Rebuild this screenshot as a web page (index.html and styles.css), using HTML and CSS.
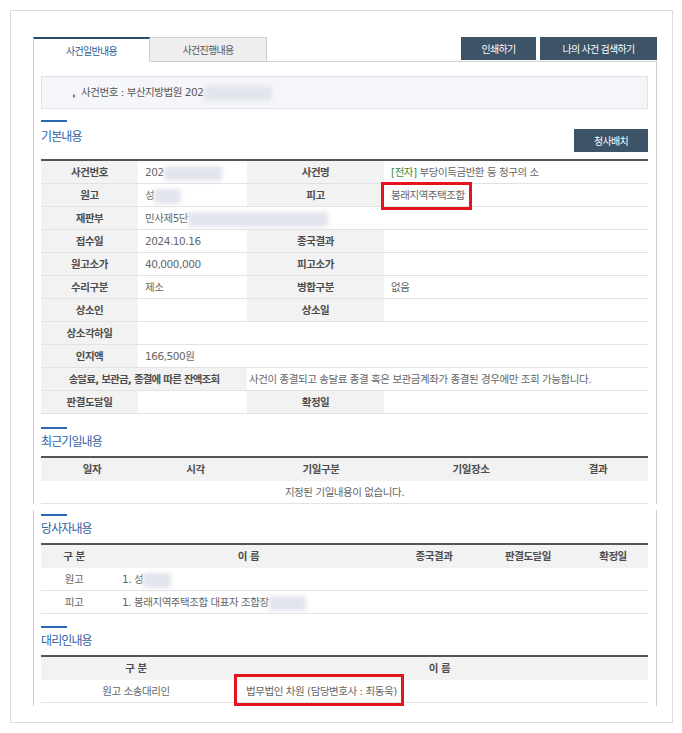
FILE: index.html
```html
<!DOCTYPE html>
<html lang="ko">
<head>
<meta charset="utf-8">
<title>사건일반내용</title>
<link rel="stylesheet" href="styles.css">
</head>
<body>
<div class="frame">
  <div class="tabs">
    <div class="tab tab-active">사건일반내용</div>
    <div class="tab tab-inactive">사건진행내용</div>
    <div class="tab-fill"></div>
    <div class="tab-actions">
      <button class="btn btn-print">인쇄하기</button>
      <button class="btn btn-search">나의 사건 검색하기</button>
    </div>
  </div>

  <div class="panel panel-top">
    <div class="case-box"><span class="bullet"></span>사건번호 : 부산지방법원 202<span class="redact r68"></span></div>

    <div class="section-bar bar-first"></div>
    <div class="section-head head-btn">
      <h2>기본내용</h2>
      <button class="btn btn-map">청사배치</button>
    </div>
    <table class="grid info">
      <colgroup><col class="ic1"><col class="ic2"><col class="ic3"><col></colgroup>
      <tbody>
        <tr><th>사건번호</th><td>202<span class="redact r58"></span></td><th>사건명</th><td><span class="etag">[전자]</span> 부당이득금반환 등 청구의 소</td></tr>
        <tr><th>원고</th><td>성<span class="redact r27"></span></td><th>피고</th><td><span class="marked mark-a">봉래지역주택조합</span></td></tr>
        <tr><th>재판부</th><td colspan="3">민사제5단<span class="redact r140"></span></td></tr>
        <tr><th>접수일</th><td>2024.10.16</td><th>종국결과</th><td></td></tr>
        <tr><th>원고소가</th><td>40,000,000</td><th>피고소가</th><td></td></tr>
        <tr><th>수리구분</th><td>제소</td><th>병합구분</th><td>없음</td></tr>
        <tr><th>상소인</th><td></td><th>상소일</th><td></td></tr>
        <tr><th>상소각하일</th><td colspan="3"></td></tr>
        <tr><th>인지액</th><td colspan="3">166,500원</td></tr>
        <tr><th colspan="2" class="long">송달료, 보관금, 종결에 따른 잔액조회</th><td colspan="2" class="tight">사건이 종결되고 송달료 종결 혹은 보관금계좌가 종결된 경우에만 조회 가능합니다.</td></tr>
        <tr><th>판결도달일</th><td></td><th>확정일</th><td></td></tr>
      </tbody>
    </table>

    <div class="section-bar bar-gap13"></div>
    <div class="section-head"><h2>최근기일내용</h2></div>
    <table class="grid list">
      <colgroup><col class="dc1"><col class="dc2"><col class="dc3"><col class="dc4"><col></colgroup>
      <thead><tr><th>일자</th><th>시각</th><th>기일구분</th><th>기일장소</th><th>결과</th></tr></thead>
      <tbody><tr><td colspan="5" class="mid">지정된 기일내용이 없습니다.</td></tr></tbody>
    </table>
  </div>

  <div class="panel panel-bottom">
    <div class="section-bar"></div>
    <div class="section-head"><h2>당사자내용</h2></div>
    <table class="grid list">
      <colgroup><col class="pc1"><col class="pc2"><col class="pc3"><col class="pc4"><col></colgroup>
      <thead><tr><th>구 분</th><th>이 름</th><th>종국결과</th><th>판결도달일</th><th>확정일</th></tr></thead>
      <tbody>
        <tr><td class="mid">원고</td><td class="name">1. 성<span class="redact r28"></span></td><td></td><td></td><td></td></tr>
        <tr><td class="mid">피고</td><td class="name">1. 봉래지역주택조합 대표자 조합장<span class="redact r37"></span></td><td></td><td></td><td></td></tr>
      </tbody>
    </table>

    <div class="section-bar bar-gap12"></div>
    <div class="section-head"><h2>대리인내용</h2></div>
    <table class="grid list">
      <colgroup><col class="ac1"><col></colgroup>
      <thead><tr><th>구 분</th><th>이 름</th></tr></thead>
      <tbody>
        <tr><td class="mid">원고 소송대리인</td><td class="name"><span class="marked mark-b">법무법인 차원 (담당변호사 : 최동욱)</span></td></tr>
      </tbody>
    </table>
  </div>
</div>
</body>
</html>
```

FILE: styles.css
```css
body {
  margin: 0;
  background: #fff;
  font-family: "DejaVu Sans", "Noto Sans CJK KR", sans-serif;
  font-size: 10.5px;
  letter-spacing: -0.45px;
  color: #666;
}

.frame {
  margin: 10px;
  width: 663px;
  box-sizing: border-box;
  border: 1px solid #dcdcdc;
  padding: 26px 15px 16px 22px;
}

/* tabs */
.tabs {
  display: flex;
  height: 25px;
}
.tab {
  box-sizing: border-box;
  text-align: center;
  font-size: 10px;
  letter-spacing: -0.7px;
  font-family: "Noto Sans CJK KR", sans-serif;
}
.tab-active {
  width: 117px;
  border-top: 2px solid #2c4a6e;
  border-left: 1px solid #cfcfcf;
  border-right: 1px solid #cfcfcf;
  background: #fff;
  color: #2d5a8e;
  line-height: 23px;
}
.tab-inactive {
  width: 117px;
  border: 1px solid #cfcfcf;
  border-left: none;
  background: #eee;
  color: #555;
  line-height: 23px;
}
.tab-fill {
  flex: 1;
  border-bottom: 1px solid #cfcfcf;
}
.tab-actions {
  display: flex;
  gap: 4px;
  padding-bottom: 1px;
  border-bottom: 1px solid #cfcfcf;
}

.btn {
  font-family: "Noto Sans CJK KR", sans-serif;
  font-size: 10px;
  letter-spacing: -0.7px;
  color: #fff;
  background: #3d5368;
  border: none;
  height: 23px;
  padding: 0;
  margin: 0;
  line-height: 23px;
}
.btn-print { width: 75px; }
.btn-search { width: 117px; }
.btn-map { width: 74px; margin-top: 7px; }

/* panels */
.panel {
  border-left: 1px solid #cfcfcf;
  border-right: 1px solid #cfcfcf;
  padding: 0 8px 0 7px;
}
.panel-top {
  padding-top: 14px;
}
.panel-bottom {
  margin-top: 6px;
  padding-top: 4px;
  padding-bottom: 3px;
}

.case-box {
  height: 33px;
  box-sizing: border-box;
  border: 1px solid #dfe2e8;
  background: #f5f6fa;
  padding-left: 31px;
  line-height: 31px;
  color: #555;
}
.bullet {
  display: inline-block;
  width: 0;
  height: 0;
  border-left: 3px solid #777;
  border-top: 2px solid transparent;
  border-bottom: 2px solid transparent;
  margin-right: 5px;
  vertical-align: -2px;
}

.section-bar {
  width: 26px;
  height: 2px;
  background: #2c67b4;
}
.bar-first { margin-top: 11px; }
.bar-gap13 { margin-top: 13px; }
.bar-gap12 { margin-top: 12px; }

.section-head {
  display: flex;
  justify-content: space-between;
  align-items: flex-start;
}
.section-head h2 {
  margin: 2px 0 5px;
  font-family: "Noto Sans CJK KR", sans-serif;
  font-size: 12px;
  line-height: 20px;
  font-weight: normal;
  color: #2f62a8;
  letter-spacing: -0.9px;
}
.head-btn { height: 37px; }
.head-btn h2 { margin: 4px 0 0; }

/* tables */
.grid {
  width: 100%;
  border-collapse: separate;
  border-spacing: 0;
  table-layout: fixed;
  border-top: 2px solid #555;
}
.grid th,
.grid td {
  padding: 0;
  line-height: 22px;
  border-bottom: 1px solid #e2e2e2;
  font-size: 10.5px;
  white-space: nowrap;
  overflow: visible;
}
.grid th {
  background: #f2f2f2;
  color: #4d4d4d;
  font-weight: bold;
  text-align: center;
}
.grid th.long { letter-spacing: -0.8px; }
.grid td {
  color: #666;
  text-align: left;
  padding-left: 7px;
}
.grid thead th {
  line-height: 23px;
  border-bottom: none;
}
.grid td.tight { padding-left: 2px; }
.grid td.mid { text-align: center; padding-left: 0; }
.grid td.name { padding-left: 15px; }

.info .ic1 { width: 97px; }
.info .ic2 { width: 109px; }
.info .ic3 { width: 137px; }

.dc1 { width: 102px; }
.dc2 { width: 105px; }
.dc3 { width: 146px; }
.dc4 { width: 154px; }

.pc1 { width: 66px; }
.pc2 { width: 283px; }
.pc3 { width: 88px; }
.pc4 { width: 100px; }

.ac1 { width: 190px; }

.etag { color: #3a8a3a; }

.redact {
  display: inline-block;
  height: 15px;
  vertical-align: middle;
  background: #e3e5ed;
  filter: blur(2px);
  border-radius: 2px;
}
.r27 { width: 27px; }
.r28 { width: 28px; }
.r37 { width: 37px; }
.r58 { width: 58px; }
.r68 { width: 68px; }
.r140 { width: 140px; }

.marked {
  display: inline-block;
  position: relative;
  line-height: 22px;
  vertical-align: top;
}
.marked::after {
  content: "";
  position: absolute;
  border: 3px solid #e5131d;
}
.mark-a::after { left: -10px; right: -7px; top: -2px; bottom: -4px; }
.mark-b::after { left: -12px; right: -7px; top: -6px; bottom: -4px; }
```
